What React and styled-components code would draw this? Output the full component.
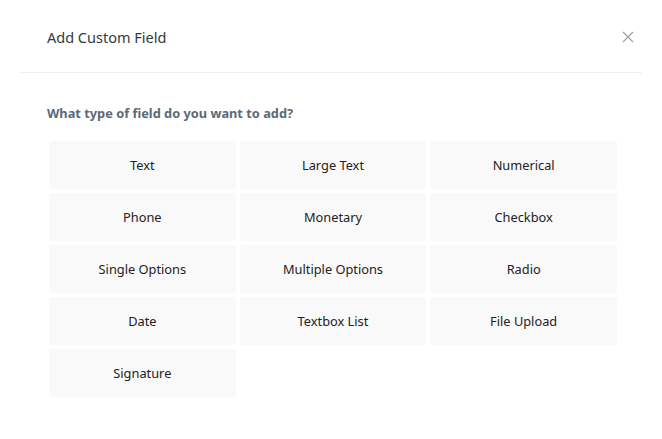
import React from "react";
import styled, { createGlobalStyle } from "styled-components";

const GlobalStyle = createGlobalStyle`
  body {
    margin: 0;
    background: #ffffff;
    font-family: "Noto Sans", "Open Sans", Arial, sans-serif;
  }
`;

const Modal = styled.div`
  width: 662px;
  height: 439px;
  padding: 0 20px;
  box-sizing: border-box;
  background: #ffffff;
`;

const Header = styled.div`
  height: 73px;
  display: flex;
  align-items: center;
  justify-content: space-between;
  padding: 0 8px 0 27px;
  border-bottom: 1px solid #eef1f4;
  box-sizing: border-box;
`;

const Title = styled.h2`
  margin: 0 0 -2px;
  font-size: 14.5px;
  font-weight: 400;
  color: #333a40;
`;

const Close = styled.button`
  border: 0;
  background: none;
  padding: 0;
  width: 12px;
  height: 12px;
  margin-bottom: -2px;
  display: flex;
  cursor: pointer;
`;

const Body = styled.div`
  padding: 31px 25px 0 27px;
`;

const Question = styled.p`
  margin: 0 0 19px;
  font-size: 12.8px;
  font-weight: 700;
  color: #5d6a74;
`;

const Grid = styled.div`
  display: grid;
  grid-template-columns: repeat(3, 1fr);
  gap: 4px;
  margin-left: 2px;
`;

const Option = styled.button`
  height: 48px;
  border: 0;
  border-radius: 3px;
  background: #f9f9f9;
  font-family: inherit;
  font-size: 12.8px;
  color: #222222;
  padding: 0;
  cursor: pointer;
`;

const fields = [
  "Text",
  "Large Text",
  "Numerical",
  "Phone",
  "Monetary",
  "Checkbox",
  "Single Options",
  "Multiple Options",
  "Radio",
  "Date",
  "Textbox List",
  "File Upload",
  "Signature",
];

export default function App() {
  return (
    <>
      <GlobalStyle />
      <Modal>
        <Header>
          <Title>Add Custom Field</Title>
          <Close aria-label="Close">
            <svg width="12" height="12" viewBox="0 0 12 12">
              <path
                d="M1 1 L11 11 M11 1 L1 11"
                stroke="#9aa3a9"
                strokeWidth="1.2"
                fill="none"
              />
            </svg>
          </Close>
        </Header>
        <Body>
          <Question>What type of field do you want to add?</Question>
          <Grid>
            {fields.map((f) => (
              <Option key={f}>{f}</Option>
            ))}
          </Grid>
        </Body>
      </Modal>
    </>
  );
}
